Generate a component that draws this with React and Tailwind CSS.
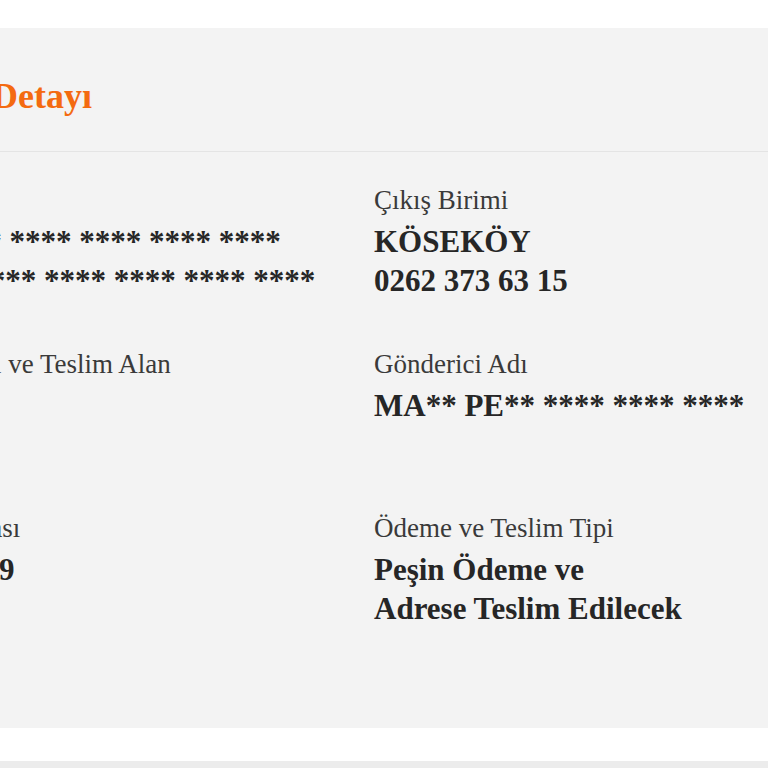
const rows = [
  {
    left: { label: "Alıcı Adresi", lines: ["MU** EK*** **** **** **** ****", "KOCAELİ **** **** **** **** ****"] },
    right: { label: "Çıkış Birimi", lines: ["KÖSEKÖY", "0262 373 63 15"] },
  },
  {
    left: { label: "Alıcı Adı Soyadı ve Teslim Alan", lines: [] },
    right: { label: "Gönderici Adı", lines: ["MA** PE** **** **** ****"] },
  },
  {
    left: { label: "Gönderi Numarası", lines: ["PT0834125429"] },
    right: { label: "Ödeme ve Teslim Tipi", lines: ["Peşin Ödeme ve", "Adrese Teslim Edilecek"] },
  },
];

function Field({ label, lines }) {
  return (
    <div className="h-[164px]">
      <p className="text-[27px] leading-[30px] text-[#3a3a3a] whitespace-nowrap">{label}</p>
      <div className="mt-[7px]">
        {lines.map((line) => (
          <p key={line} className="text-[31px] leading-[39px] font-bold text-[#262626] whitespace-nowrap">
            {line}
          </p>
        ))}
      </div>
    </div>
  );
}

export default function App() {
  return (
    <div
      className="w-[768px] h-[768px] overflow-hidden bg-white"
      style={{ fontFamily: '"Liberation Serif", "Times New Roman", serif' }}
    >
      <div className="h-[28px]" />
      <section className="ml-[-185px] w-[1100px] bg-[#f3f3f3]">
        <header className="pt-[48px] pb-[35px] pl-[40px] border-b border-[#e4e4e4]">
          <h1 className="text-[36px] leading-[40px] font-bold text-[#f46a10] whitespace-nowrap">Gönderi Detayı</h1>
        </header>
        <div className="pl-[5px] pt-[33px] pb-[51px]">
          {rows.map((row, i) => (
            <div key={i} className="grid grid-cols-[554px_1fr]">
              <Field {...row.left} />
              <Field {...row.right} />
            </div>
          ))}
        </div>
      </section>
      <div className="h-[33px]" />
      <div className="h-[7px] bg-[#ececec]" />
    </div>
  );
}
